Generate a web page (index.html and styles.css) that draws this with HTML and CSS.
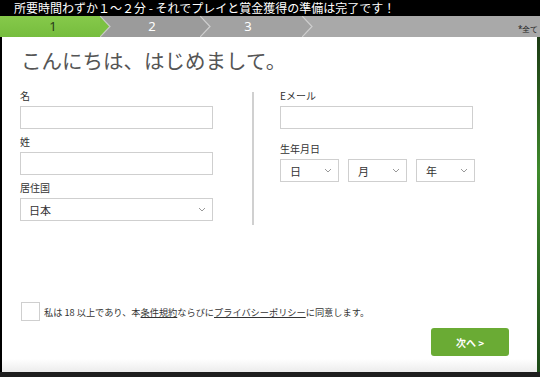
FILE: index.html
```html
<!DOCTYPE html>
<html lang="ja">
<head>
<meta charset="utf-8">
<link rel="stylesheet" href="styles.css">
</head>
<body>
<div class="topbar">所要時間わずか１～２分 - それでプレイと賞金獲得の準備は完了です！</div>
<div class="steps">
  <div class="step s1">1</div>
  <svg class="conn" width="12" height="21" viewBox="0 0 12 21"><rect width="12" height="21" fill="#9b9b9b"/><polygon points="0,0 10,10.5 0,21" fill="#7cc142"/><polyline points="0,0 10,10.5 0,21" fill="none" stroke="#c9c9c9" stroke-width="1.2"/></svg>
  <div class="step s2">2</div>
  <svg class="conn" width="12" height="21" viewBox="0 0 12 21"><rect width="12" height="21" fill="#a2a2a2"/><polygon points="0,0 10,10.5 0,21" fill="#9b9b9b"/><polyline points="0,0 10,10.5 0,21" fill="none" stroke="#cfcfcf" stroke-width="1.2"/></svg>
  <div class="step s3">3</div>
  <svg class="conn" width="12" height="21" viewBox="0 0 12 21"><rect width="12" height="21" fill="#a9a9a9"/><polygon points="0,0 10,10.5 0,21" fill="#a2a2a2"/><polyline points="0,0 10,10.5 0,21" fill="none" stroke="#cfcfcf" stroke-width="1.2"/></svg>
  <div class="step rest"><span class="req">*全て</span></div>
</div>
<div class="main">
  <div class="panel">
    <h1 class="title">こんにちは、はじめまして。</h1>
    <div class="form">
      <div class="col">
        <div class="field first">
          <div class="label">名</div>
          <div class="input"></div>
        </div>
        <div class="field">
          <div class="label">姓</div>
          <div class="input"></div>
        </div>
        <div class="field">
          <div class="label">居住国</div>
          <div class="input select"><span>日本</span><svg width="8" height="5" viewBox="0 0 8 5"><polyline points="1,1 4,4 7,1" fill="none" stroke="#999" stroke-width="1"/></svg></div>
        </div>
      </div>
      <div class="divider"></div>
      <div class="col">
        <div class="field first">
          <div class="label">Eメール</div>
          <div class="input"></div>
        </div>
        <div class="field dob">
          <div class="label">生年月日</div>
          <div class="selects">
            <div class="input select small"><span>日</span><svg width="8" height="5" viewBox="0 0 8 5"><polyline points="1,1 4,4 7,1" fill="none" stroke="#999" stroke-width="1"/></svg></div>
            <div class="input select small"><span>月</span><svg width="8" height="5" viewBox="0 0 8 5"><polyline points="1,1 4,4 7,1" fill="none" stroke="#999" stroke-width="1"/></svg></div>
            <div class="input select small"><span>年</span><svg width="8" height="5" viewBox="0 0 8 5"><polyline points="1,1 4,4 7,1" fill="none" stroke="#999" stroke-width="1"/></svg></div>
          </div>
        </div>
      </div>
    </div>
    <div class="agree">
      <div class="checkbox"></div>
      <span class="agree-text">私は 18 以上であり、本<u>条件規約</u>ならびに<u>プライバシーポリシー</u>に同意します。</span>
    </div>
    <div class="actions">
      <button class="next">次へ &gt;</button>
    </div>
  </div>
  <div class="side"></div>
</div>
<div class="bottom"></div>
</body>
</html>
```
FILE: styles.css
```css
* { box-sizing: border-box; }
html, body { margin: 0; padding: 0; }
body {
  background: #000;
  width: 540px;
  height: 377px;
  overflow: hidden;
  font-family: "Noto Sans CJK JP", "Noto Sans", sans-serif;
  color: #333;
}
.topbar {
  height: 16px;
  line-height: 16px;
  font-size: 12px;
  color: #fff;
  padding-left: 14px;
  white-space: nowrap;
  overflow: hidden;
}
.steps {
  display: flex;
  height: 21px;
  background: #a9a9a9;
}
.conn { display: block; flex: none; }
.step {
  height: 21px;
  line-height: 21px;
  font-size: 13px;
  font-family: "Noto Sans", sans-serif;
  color: #fff;
  text-align: center;
  flex: none;
}
.s1 {
  width: 100px;
  padding-left: 6px;
  color: #2a3a1a;
  background: linear-gradient(#86c94a, #76bd3e);
}
.s2 { width: 88px; padding-right: 8px; background: #9b9b9b; }
.s3 { width: 90px; padding-right: 18px; background: #a2a2a2; }
.rest {
  flex: 1;
  text-align: left;
  padding-left: 204px;
  white-space: nowrap;
}
.req { font-size: 8px; color: #222; vertical-align: top; position: relative; top: 2px; }
.main {
  display: flex;
  height: 335px;
}
.panel {
  flex: 1;
  margin-left: 2px;
  background: linear-gradient(#fff 0, #fff 322px, #ececec 335px);
  padding: 11px 0 0 18px;
}
.side {
  width: 3px;
  background: linear-gradient(#1c3a14, #3f8a2c 40%, #1d4a18);
}
.bottom { height: 5px; background: #1e1e1e; }
.title {
  margin: 0;
  font-size: 20.5px;
  font-weight: normal;
  color: #555;
  line-height: 24px;
  padding-left: 1px;
}
.form {
  display: flex;
  margin-top: 17px;
}
.col { width: 193px; flex: none; }
.divider {
  width: 2px;
  height: 133px;
  margin-top: 3px;
  background: #d0d0d0;
  margin-left: 39px;
  margin-right: 26px;
}
.field { margin-top: 6px; }
.field.first { margin-top: 0; }
.field.dob { margin-top: 13px; }
.label {
  font-size: 10px;
  line-height: 14px;
  margin-bottom: 3px;
  color: #333;
}
.input {
  height: 23px;
  border: 1px solid #cfcfcf;
  background: #fff;
}
.select {
  display: flex;
  align-items: center;
  justify-content: space-between;
  padding: 0 6px 0 8px;
  font-size: 11px;
  color: #333;
}
.selects {
  display: flex;
  gap: 9px;
  width: 194px;
}
.select.small { width: 59px; flex: none; padding-left: 9px; }
.agree {
  display: flex;
  align-items: center;
  margin-top: 77px;
  padding-left: 1px;
}
.checkbox {
  width: 19px;
  height: 19px;
  border: 1px solid #cfcfcf;
  background: #fff;
  margin-right: 4px;
}
.agree-text { font-size: 9.2px; color: #333; }
.agree-text u { text-decoration-thickness: 1px; text-underline-offset: 1px; }
.actions {
  display: flex;
  justify-content: flex-end;
  padding-right: 28px;
  margin-top: 7px;
}
.next {
  width: 78px;
  height: 28px;
  border: none;
  border-radius: 3px;
  background: #6aab34;
  color: #fff;
  font-family: "Noto Sans CJK JP", sans-serif;
  font-weight: bold;
  font-size: 10px;
  padding: 0;
}
```
